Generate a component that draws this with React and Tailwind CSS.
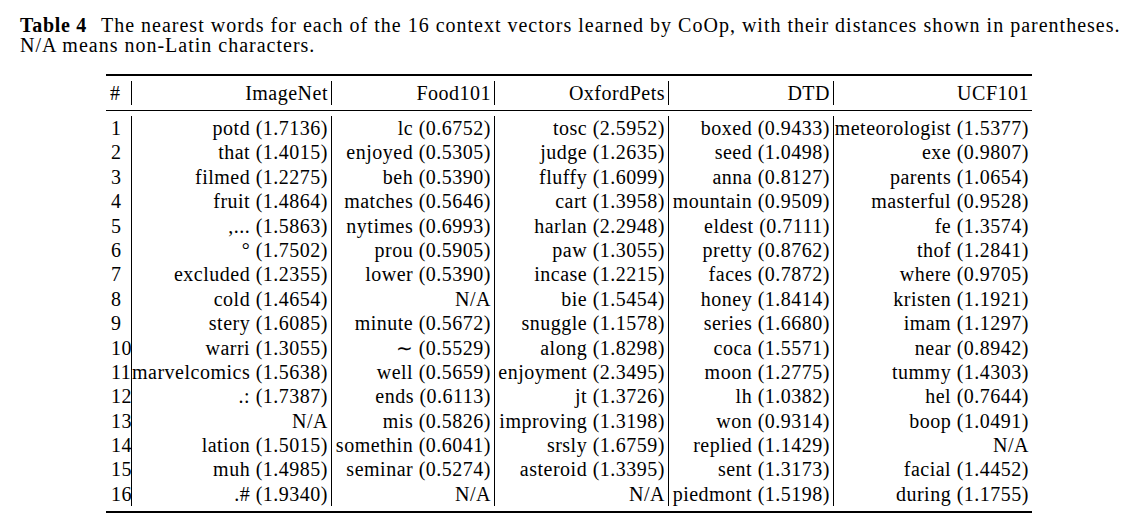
import React from "react";

const rows = [
  ["1", "potd (1.7136)", "lc (0.6752)", "tosc (2.5952)", "boxed (0.9433)", "meteorologist (1.5377)"],
  ["2", "that (1.4015)", "enjoyed (0.5305)", "judge (1.2635)", "seed (1.0498)", "exe (0.9807)"],
  ["3", "filmed (1.2275)", "beh (0.5390)", "fluffy (1.6099)", "anna (0.8127)", "parents (1.0654)"],
  ["4", "fruit (1.4864)", "matches (0.5646)", "cart (1.3958)", "mountain (0.9509)", "masterful (0.9528)"],
  ["5", ",... (1.5863)", "nytimes (0.6993)", "harlan (2.2948)", "eldest (0.7111)", "fe (1.3574)"],
  ["6", "° (1.7502)", "prou (0.5905)", "paw (1.3055)", "pretty (0.8762)", "thof (1.2841)"],
  ["7", "excluded (1.2355)", "lower (0.5390)", "incase (1.2215)", "faces (0.7872)", "where (0.9705)"],
  ["8", "cold (1.4654)", "N/A", "bie (1.5454)", "honey (1.8414)", "kristen (1.1921)"],
  ["9", "stery (1.6085)", "minute (0.5672)", "snuggle (1.1578)", "series (1.6680)", "imam (1.1297)"],
  ["10", "warri (1.3055)", "∼ (0.5529)", "along (1.8298)", "coca (1.5571)", "near (0.8942)"],
  ["11", "marvelcomics (1.5638)", "well (0.5659)", "enjoyment (2.3495)", "moon (1.2775)", "tummy (1.4303)"],
  ["12", ".: (1.7387)", "ends (0.6113)", "jt (1.3726)", "lh (1.0382)", "hel (0.7644)"],
  ["13", "N/A", "mis (0.5826)", "improving (1.3198)", "won (0.9314)", "boop (1.0491)"],
  ["14", "lation (1.5015)", "somethin (0.6041)", "srsly (1.6759)", "replied (1.1429)", "N/A"],
  ["15", "muh (1.4985)", "seminar (0.5274)", "asteroid (1.3395)", "sent (1.3173)", "facial (1.4452)"],
  ["16", ".# (1.9340)", "N/A", "N/A", "piedmont (1.5198)", "during (1.1755)"],
];

const headers = ["#", "ImageNet", "Food101", "OxfordPets", "DTD", "UCF101"];

const cols = "grid grid-cols-[26px_200px_163px_174px_165px_198px]";

export default function App() {
  return (
    <div className="w-[1138px] h-[526px] bg-white text-black font-['Liberation_Serif',serif] overflow-hidden">
      <div className="pt-[15px] pl-[20px] text-[20px] leading-[20px] tracking-[1px] whitespace-nowrap">
        <div>
          <span className="font-bold tracking-[0.7px]">Table 4</span>
          <span className="ml-[14px]">
            The nearest words for each of the 16 context vectors learned by CoOp, with their distances shown in parentheses.
          </span>
        </div>
        <div>N/A means non-Latin characters.</div>
      </div>

      <div className="ml-[106px] mt-[19px] w-[926px] text-[20px] tracking-[0.5px]">
        <div className="h-[2px] bg-black" />
        <div className={`${cols} py-[5px]`}>
          {headers.map((h, i) => (
            <div
              key={h}
              className={`h-[24px] leading-[24px] ${i === 0 ? "pl-[4px] text-left" : "pr-[3px] text-right"} ${i < 5 ? "border-r border-black" : ""}`}
            >
              {h}
            </div>
          ))}
        </div>
        <div className="h-px bg-black" />
        <div className={`${cols} pt-[5px] pb-[5px]`}>
          {rows.map((r) =>
            r.map((c, i) => (
              <div
                key={r[0] + "-" + i}
                className={`h-[24.4px] leading-[24.4px] whitespace-nowrap ${i === 0 ? "pl-[5px] text-left" : "pr-[3px] text-right"} ${i < 5 ? "border-r border-black" : ""}`}
              >
                {c}
              </div>
            ))
          )}
        </div>
        <div className="h-[2px] bg-black" />
      </div>
    </div>
  );
}
